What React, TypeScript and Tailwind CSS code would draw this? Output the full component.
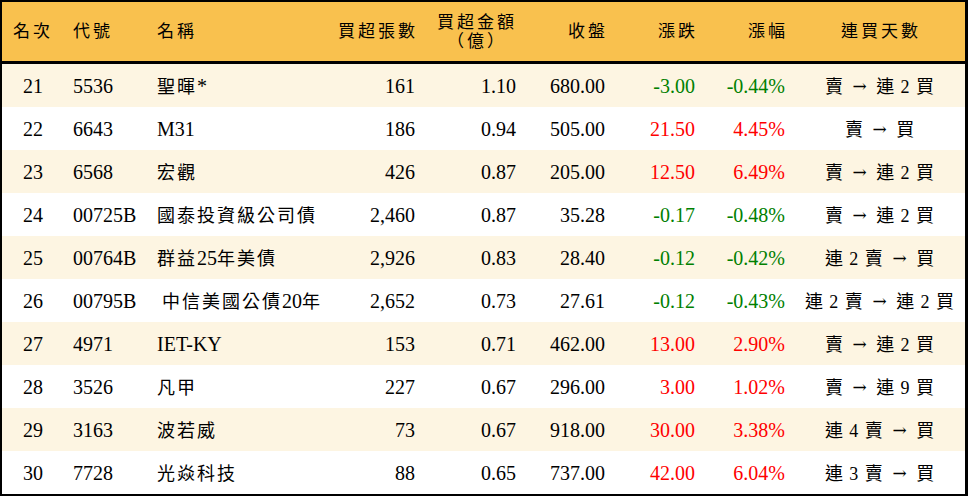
import React from 'react';

type Row = {
  rank: number;
  code: string;
  name: string;
  lots: string;
  amount: string;
  close: string;
  change: string;
  pct: string;
  streak: string;
};

const rows: Row[] = [
  { rank: 21, code: '5536', name: '聖暉*', lots: '161', amount: '1.10', close: '680.00', change: '-3.00', pct: '-0.44%', streak: '賣 → 連 2 買' },
  { rank: 22, code: '6643', name: 'M31', lots: '186', amount: '0.94', close: '505.00', change: '21.50', pct: '4.45%', streak: '賣 → 買' },
  { rank: 23, code: '6568', name: '宏觀', lots: '426', amount: '0.87', close: '205.00', change: '12.50', pct: '6.49%', streak: '賣 → 連 2 買' },
  { rank: 24, code: '00725B', name: '國泰投資級公司債', lots: '2,460', amount: '0.87', close: '35.28', change: '-0.17', pct: '-0.48%', streak: '賣 → 連 2 買' },
  { rank: 25, code: '00764B', name: '群益25年美債', lots: '2,926', amount: '0.83', close: '28.40', change: '-0.12', pct: '-0.42%', streak: '連 2 賣 → 買' },
  { rank: 26, code: '00795B', name: ' 中信美國公債20年', lots: '2,652', amount: '0.73', close: '27.61', change: '-0.12', pct: '-0.43%', streak: '連 2 賣 → 連 2 買' },
  { rank: 27, code: '4971', name: 'IET-KY', lots: '153', amount: '0.71', close: '462.00', change: '13.00', pct: '2.90%', streak: '賣 → 連 2 買' },
  { rank: 28, code: '3526', name: '凡甲', lots: '227', amount: '0.67', close: '296.00', change: '3.00', pct: '1.02%', streak: '賣 → 連 9 買' },
  { rank: 29, code: '3163', name: '波若威', lots: '73', amount: '0.67', close: '918.00', change: '30.00', pct: '3.38%', streak: '連 4 賣 → 買' },
  { rank: 30, code: '7728', name: '光焱科技', lots: '88', amount: '0.65', close: '737.00', change: '42.00', pct: '6.04%', streak: '連 3 賣 → 買' },
];

const cols = 'grid grid-cols-[60px_95px_168px_90px_101px_89px_90px_90px_1fr]';

// CJK runs get a smaller size with tracking, latin runs stay plain serif
function Mixed({ text }: { text: string }) {
  const parts = text.split(/([\u4e00-\u9fff]+)/).filter(Boolean);
  return (
    <>
      {parts.map((p, i) =>
        /[\u4e00-\u9fff]/.test(p) ? (
          <span key={i} className="text-[18px] tracking-[2px]">{p}</span>
        ) : (
          <span key={i}>{p}</span>
        )
      )}
    </>
  );
}

function Streak({ text }: { text: string }) {
  const parts = text.split('→');
  return (
    <span className="text-[18px] tracking-[1px]">
      {parts[0]}
      <span className="text-[17px] inline-block mx-[3px] -translate-y-[1px]" style={{ fontFamily: '"DejaVu Serif", serif' }}>→</span>
      {parts[1]}
    </span>
  );
}

export default function App() {
  return (
    <div
      className="w-[968px] h-[496px] bg-white border-black border-t-2 border-l-2 border-r-[3px] border-b-[3px] text-black"
      style={{ fontFamily: '"Liberation Serif", "Noto Sans CJK TC", serif' }}
    >
      {/* header */}
      <div className={`${cols} h-[62px] bg-[#f9c14e] border-b-[3px] border-black items-center text-[17px] tracking-[3px]`}>
        <div className="text-center pl-[2px]">名次</div>
        <div className="pl-[11px]">代號</div>
        <div>名稱</div>
        <div className="text-right -mr-[3px]">買超張數</div>
        <div className="flex justify-end">
          <div className="flex flex-col items-center leading-[19px] -mr-[1px]">
            <span>買超金額</span>
            <span>（億）</span>
          </div>
        </div>
        <div className="text-right -mr-[3px]">收盤</div>
        <div className="text-right -mr-[3px]">漲跌</div>
        <div className="text-right -mr-[3px]">漲幅</div>
        <div className="text-center pl-[12px]">連買天數</div>
      </div>

      {rows.map((r, i) => {
        const up = !r.change.startsWith('-');
        const tone = up ? 'text-[#ff0000]' : 'text-[#008000]';
        return (
          <div
            key={r.rank}
            className={`${cols} h-[43px] items-center text-[20px] ${i % 2 === 0 ? 'bg-[#fdf5e2]' : 'bg-white'}`}
          >
            <div className="text-center pl-[2px]">{r.rank}</div>
            <div className="pl-[11px]">{r.code}</div>
            <div className="whitespace-pre">
              <Mixed text={r.name} />
            </div>
            <div className="text-right">{r.lots}</div>
            <div className="text-right">{r.amount}</div>
            <div className="text-right">{r.close}</div>
            <div className={`text-right ${tone}`}>{r.change}</div>
            <div className={`text-right ${tone}`}>{r.pct}</div>
            <div className="text-center pl-[10px] whitespace-nowrap">
              <Streak text={r.streak} />
            </div>
          </div>
        );
      })}
    </div>
  );
}
